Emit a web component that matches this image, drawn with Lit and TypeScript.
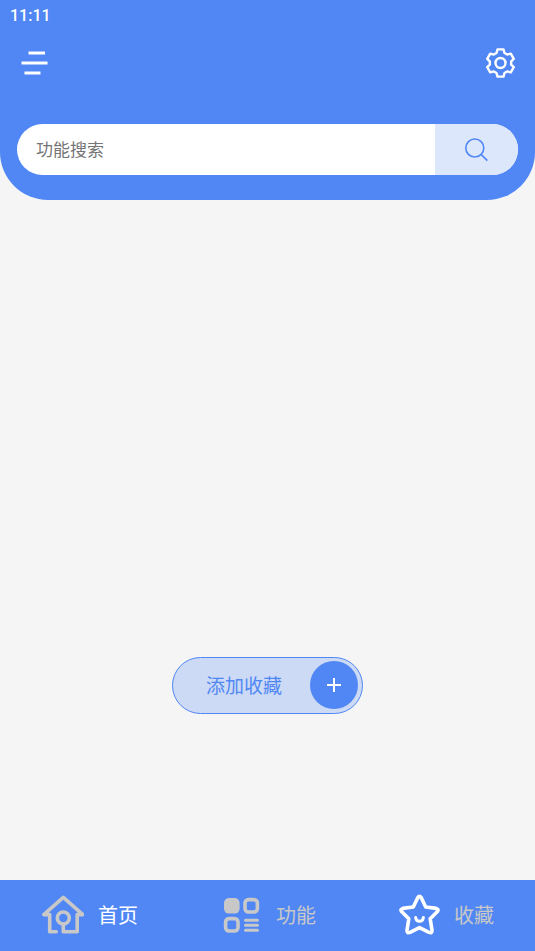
import { LitElement, html, css, svg } from "lit";
import { customElement, state } from "lit/decorators.js";
import { classMap } from "lit/directives/class-map.js";

// Outline of a six-toothed gear centred on (15.5, 16).
function gearPoints(): string {
  const tooth = [
    [-4, -10],
    [-3, -13.6],
    [3, -13.6],
    [4, -10],
  ];
  const points: string[] = [];
  for (let i = 0; i < 6; i++) {
    const a = (i * Math.PI) / 3;
    for (const [x, y] of tooth) {
      const px = 15.5 + x * Math.cos(a) - y * Math.sin(a);
      const py = 16 + x * Math.sin(a) + y * Math.cos(a);
      points.push(`${px.toFixed(2)},${py.toFixed(2)}`);
    }
  }
  return points.join(" ");
}

const homeIcon = svg`
  <path d="M1.8 20.6 L21.3 3.4 L40.8 20.6 H35.2 V37.8 H21.3 V30 M1.8 20.6 H7.7 V37.8 H14.2"/>
  <circle cx="21.3" cy="24" r="6"/>`;

const gridIcon = svg`
  <rect class="solid" x="4" y="4" width="15.6" height="15.6" rx="5"/>
  <rect x="25" y="5.6" width="12.4" height="12.4" rx="3.4"/>
  <rect x="5.6" y="24.6" width="12.4" height="12.4" rx="3.4"/>
  <path class="thin" d="M25.5 26.2 H37.5 M25.5 31.2 H37.5 M25.5 36.2 H37.5"/>`;

const starIcon = svg`
  <path d="M19.7 3.8 Q21.5 0.9 23.3 3.8 L27.7 13 L38.2 14.4 Q41.2 15.2 39.4 17.6 L32.2 24.8 L34 36.2 Q34.2 39.6 31 38.4 L21.5 33.6 L12 38.4 Q8.8 39.6 9 36.2 L10.8 24.8 L3.6 17.6 Q1.8 15.2 4.8 14.4 L15.3 13 Z"/>
  <path class="thin" d="M17.6 23.4 C18.2 28.6 24.8 28.6 25.4 23.4"/>`;

const tabs = [
  { id: "home", label: "首页", icon: homeIcon, bright: false },
  { id: "features", label: "功能", icon: gridIcon, bright: false },
  { id: "favorites", label: "收藏", icon: starIcon, bright: true },
];

@customElement("app-root")
export class AppRoot extends LitElement {
  @state() private active = "home";

  static styles = css`
    :host {
      --blue: #5087f4;
      --muted: #c8c8c8;
      display: flex;
      flex-direction: column;
      min-height: 100vh;
      background: #f5f5f5;
      font-family: "Noto Sans CJK SC", sans-serif;
    }
    * {
      box-sizing: border-box;
    }
    button {
      border: 0;
      padding: 0;
      background: none;
      font: inherit;
      color: inherit;
      cursor: pointer;
    }
    svg {
      display: block;
      fill: none;
      stroke: currentColor;
    }
    .header {
      background: var(--blue);
      border-radius: 0 0 48px 48px;
      color: #fff;
      padding-bottom: 25px;
    }
    .status {
      height: 32px;
      padding-left: 10px;
      font: 500 16px/32px Roboto, sans-serif;
    }
    .toolbar {
      display: flex;
      justify-content: space-between;
      align-items: center;
      height: 62px;
      padding: 0 18px;
    }
    .search {
      display: flex;
      height: 51px;
      margin: 30px 17px 0;
      border-radius: 26px;
      overflow: hidden;
      background: #fff;
    }
    .field {
      flex: 1;
      min-width: 0;
      border: 0;
      outline: 0;
      padding: 0 19px 2px;
      background: none;
      font: 17px/24px "Noto Sans CJK SC", sans-serif;
      color: #333;
    }
    .field::placeholder {
      color: #757575;
      opacity: 1;
    }
    .go {
      display: grid;
      place-items: center;
      width: 83px;
      background: #dce7fc;
      color: var(--blue);
    }
    .content {
      flex: 1;
      display: flex;
      align-items: flex-end;
      justify-content: center;
      padding-bottom: 166px;
    }
    .add {
      display: flex;
      align-items: center;
      gap: 28px;
      height: 57px;
      padding: 0 4px 1px 33px;
      border: 1px solid var(--blue);
      border-radius: 29px;
      background: #ccdaf5;
      color: var(--blue);
      font-size: 19px;
      line-height: 28px;
    }
    .plus {
      display: grid;
      place-items: center;
      width: 48px;
      height: 48px;
      border-radius: 50%;
      background: var(--blue);
      color: #fff;
    }
    .nav {
      display: flex;
      height: 71px;
      padding: 0 0 2px 1px;
      background: var(--blue);
    }
    .tab {
      flex: 1;
      display: flex;
      align-items: center;
      justify-content: center;
      gap: 14px;
      color: var(--muted);
      font-size: 20px;
      line-height: 30px;
    }
    .tab.active {
      color: #fff;
    }
    .icon {
      color: var(--muted);
      stroke-width: 3.6;
      stroke-linejoin: round;
      stroke-linecap: round;
    }
    .icon.bright {
      color: #fff;
    }
    .icon .solid {
      fill: currentColor;
      stroke: none;
    }
    .icon .thin {
      stroke-width: 3;
    }
  `;

  render() {
    return html`
      <header class="header">
        <div class="status">11:11</div>
        <div class="toolbar">
          <button aria-label="菜单">
            <svg width="32" height="32" stroke-width="2.8">
              <path d="M10.5 6 H27 M3.5 16 H29.5 M6.5 26 H22.5" />
            </svg>
          </button>
          <button aria-label="设置">
            <svg width="32" height="32" stroke-width="2.4" stroke-linejoin="round">
              <polygon points=${gearPoints()} />
              <circle cx="15.5" cy="16" r="5" />
            </svg>
          </button>
        </div>
        <form class="search" @submit=${(e: Event) => e.preventDefault()}>
          <input class="field" type="text" placeholder="功能搜索" aria-label="功能搜索" />
          <button class="go" type="submit" aria-label="搜索">
            <svg width="24" height="24" stroke-width="1.6">
              <circle cx="9.8" cy="10" r="9" />
              <path d="M16 16.4 L22.4 22.6" />
            </svg>
          </button>
        </form>
      </header>
      <main class="content">
        <button class="add">
          <span>添加收藏</span>
          <span class="plus">
            <svg width="16" height="16" stroke-width="2"><path d="M8 1 V15 M1 8 H15" /></svg>
          </span>
        </button>
      </main>
      <nav class="nav">
        ${tabs.map(
          (t) => html`
            <button
              class=${classMap({ tab: true, active: t.id === this.active })}
              @click=${() => (this.active = t.id)}
            >
              <svg class=${classMap({ icon: true, bright: t.bright })} width="42" height="42">
                ${t.icon}
              </svg>
              <span>${t.label}</span>
            </button>
          `
        )}
      </nav>
    `;
  }
}
